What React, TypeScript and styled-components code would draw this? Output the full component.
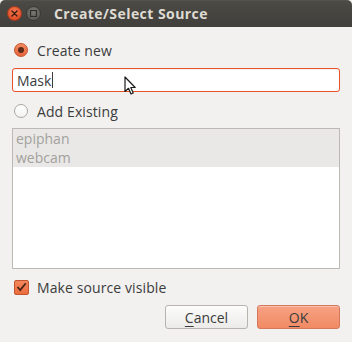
import React, { useState } from "react";
import styled, { createGlobalStyle } from "styled-components";

const GlobalStyle = createGlobalStyle`
	html, body {
		margin: 0;
		padding: 0;
		background: #f2f1f0;
	}
	body {
		font-family: "Open Sans", "Liberation Sans", sans-serif;
		color: #3c3c3c;
	}
`;

const Window = styled.div`
	position: relative;
	width: 352px;
	height: 342px;
	display: flex;
	flex-direction: column;
	background: #f2f1f0;
	overflow: hidden;
`;

const TitleBar = styled.div`
	height: 27px;
	flex: none;
	display: flex;
	align-items: center;
	padding-left: 7px;
	box-sizing: border-box;
	background: linear-gradient(to bottom, #5a5952 0, #4b4a45 1px, #403f3b 100%);
	border-radius: 5px 5px 0 0;
`;

const WinButton = styled.div<{ $close?: boolean }>`
	width: 15px;
	height: 15px;
	border-radius: 50%;
	box-sizing: border-box;
	margin-right: 4px;
	display: flex;
	align-items: center;
	justify-content: center;
	background: ${(p) =>
		p.$close
			? "radial-gradient(circle at 50% 35%, #f27a4f 0, #e2502a 70%, #c8431f 100%)"
			: "radial-gradient(circle at 50% 35%, #7a7973 0, #5f5e59 70%, #4e4d48 100%)"};
	border: 1px solid ${(p) => (p.$close ? "#a83a1b" : "#3a3935")};
`;

const Title = styled.div`
	margin-left: 9px;
	font-family: "Open Sans", "Liberation Sans", sans-serif;
	font-weight: 700;
	font-size: 14px;
	color: #dfdbd2;
	letter-spacing: 0.45px;
`;

const Body = styled.div`
	flex: 1;
	display: flex;
	flex-direction: column;
	padding: 13px 12px 0 12px;
`;

const OptionRow = styled.label<{ $gap?: number }>`
	display: flex;
	align-items: center;
	height: 20px;
	padding-left: 2px;
	margin-bottom: ${(p) => p.$gap ?? 0}px;
	font-size: 14px;
	letter-spacing: 0.1px;
	color: #3c3c3c;
	cursor: default;
`;

const Radio = styled.span<{ $checked?: boolean }>`
	width: 14px;
	height: 14px;
	border-radius: 50%;
	box-sizing: border-box;
	margin-right: 9px;
	display: flex;
	align-items: center;
	justify-content: center;
	background: ${(p) =>
		p.$checked ? "linear-gradient(#f38a60, #e8643a)" : "linear-gradient(#ffffff, #f4f3f2)"};
	border: 1px solid ${(p) => (p.$checked ? "#c5532c" : "#aaa7a2")};

	&::after {
		content: "";
		display: ${(p) => (p.$checked ? "block" : "none")};
		width: 6px;
		height: 6px;
		border-radius: 50%;
		background: #5c2a1a;
	}
`;

const CheckBox = styled.span`
	width: 15px;
	height: 15px;
	border-radius: 2px;
	box-sizing: border-box;
	margin-right: 8px;
	display: flex;
	align-items: center;
	justify-content: center;
	background: linear-gradient(#f4875c, #ec6c3f);
	border: 1px solid #c0552e;
`;

const NameInput = styled.div`
	height: 24px;
	box-sizing: border-box;
	border: 1px solid #e95420;
	border-radius: 3px;
	background: #ffffff;
	display: flex;
	align-items: center;
	padding-left: 4px;
	margin-bottom: 9px;
	font-size: 14px;
	color: #3c3c3c;
	box-shadow: inset 0 1px 1px rgba(0, 0, 0, 0.06);
`;

const Caret = styled.span`
	display: inline-block;
	width: 1px;
	height: 16px;
	background: #3c3c3c;
	margin-left: 1px;
`;

const SourceList = styled.div`
	height: 141px;
	margin: 7px 0 8px 0;
	box-sizing: border-box;
	border: 1px solid #bcb9b5;
	background: #ffffff;
`;

const ListItem = styled.div`
	height: 19px;
	line-height: 19px;
	padding-left: 3px;
	font-size: 14px;
	color: #a3a19d;
	background: #e9e8e6;
`;

const ButtonRow = styled.div`
	display: flex;
	justify-content: flex-end;
	gap: 9px;
	margin-top: 8px;
`;

const DialogButton = styled.button<{ $primary?: boolean }>`
	width: 83px;
	height: 24px;
	box-sizing: border-box;
	border-radius: 3px;
	font-family: "Open Sans", "Liberation Sans", sans-serif;
	font-size: 14px;
	color: #3c3c3c;
	padding: 0;
	display: flex;
	align-items: center;
	justify-content: center;
	background: ${(p) =>
		p.$primary ? "linear-gradient(#f6a284, #f18a63)" : "linear-gradient(#fcfcfc, #ecebe9)"};
	border: 1px solid ${(p) => (p.$primary ? "#d4775a" : "#b7b4af")};
	box-shadow: inset 0 1px 0 rgba(255, 255, 255, 0.35);

	u {
		text-decoration-thickness: 1px;
		text-underline-offset: 3px;
	}
`;

const Pointer = styled.svg`
	position: absolute;
	left: 124px;
	top: 76px;
	pointer-events: none;
`;

export default function App() {
	const [mode, setMode] = useState<"new" | "existing">("new");
	const sources = ["epiphan", "webcam"];

	return (
		<>
			<GlobalStyle />
			<Window>
				<TitleBar>
					<WinButton $close>
						<svg width="7" height="7" viewBox="0 0 7 7">
							<path d="M1 1 L6 6 M6 1 L1 6" stroke="#3b1a10" strokeWidth="1.4" strokeLinecap="round" />
						</svg>
					</WinButton>
					<WinButton>
						<svg width="7" height="7" viewBox="0 0 7 7">
							<rect x="0.5" y="0.5" width="6" height="6" fill="none" stroke="#2e2d2a" strokeWidth="1.2" />
						</svg>
					</WinButton>
					<Title>Create/Select Source</Title>
				</TitleBar>

				<Body>
					<OptionRow $gap={8} onClick={() => setMode("new")}>
						<Radio $checked={mode === "new"} />
						Create new
					</OptionRow>
					<NameInput>
						Mask
						<Caret />
					</NameInput>
					<OptionRow onClick={() => setMode("existing")}>
						<Radio $checked={mode === "existing"} />
						Add Existing
					</OptionRow>
					<SourceList>
						{sources.map((s) => (
							<ListItem key={s}>{s}</ListItem>
						))}
					</SourceList>
					<OptionRow>
						<CheckBox>
							<svg width="11" height="10" viewBox="0 0 11 10">
								<path d="M1.5 5 L4.2 8 L9.8 1.2" fill="none" stroke="#4a2416" strokeWidth="1.8" />
							</svg>
						</CheckBox>
						Make source visible
					</OptionRow>
					<ButtonRow>
						<DialogButton>
							<u>C</u>ancel
						</DialogButton>
						<DialogButton $primary>
							<u>O</u>K
						</DialogButton>
					</ButtonRow>
				</Body>

				<Pointer width="13" height="20" viewBox="0 0 13 20">
					<path
						d="M1 1 L1 15.5 L4.5 12.3 L7 18 L9.2 17 L6.8 11.5 L11.2 11.5 Z"
						fill="#ffffff"
						stroke="#1a1a1a"
						strokeWidth="1.2"
						strokeLinejoin="round"
					/>
				</Pointer>
			</Window>
		</>
	);
}
